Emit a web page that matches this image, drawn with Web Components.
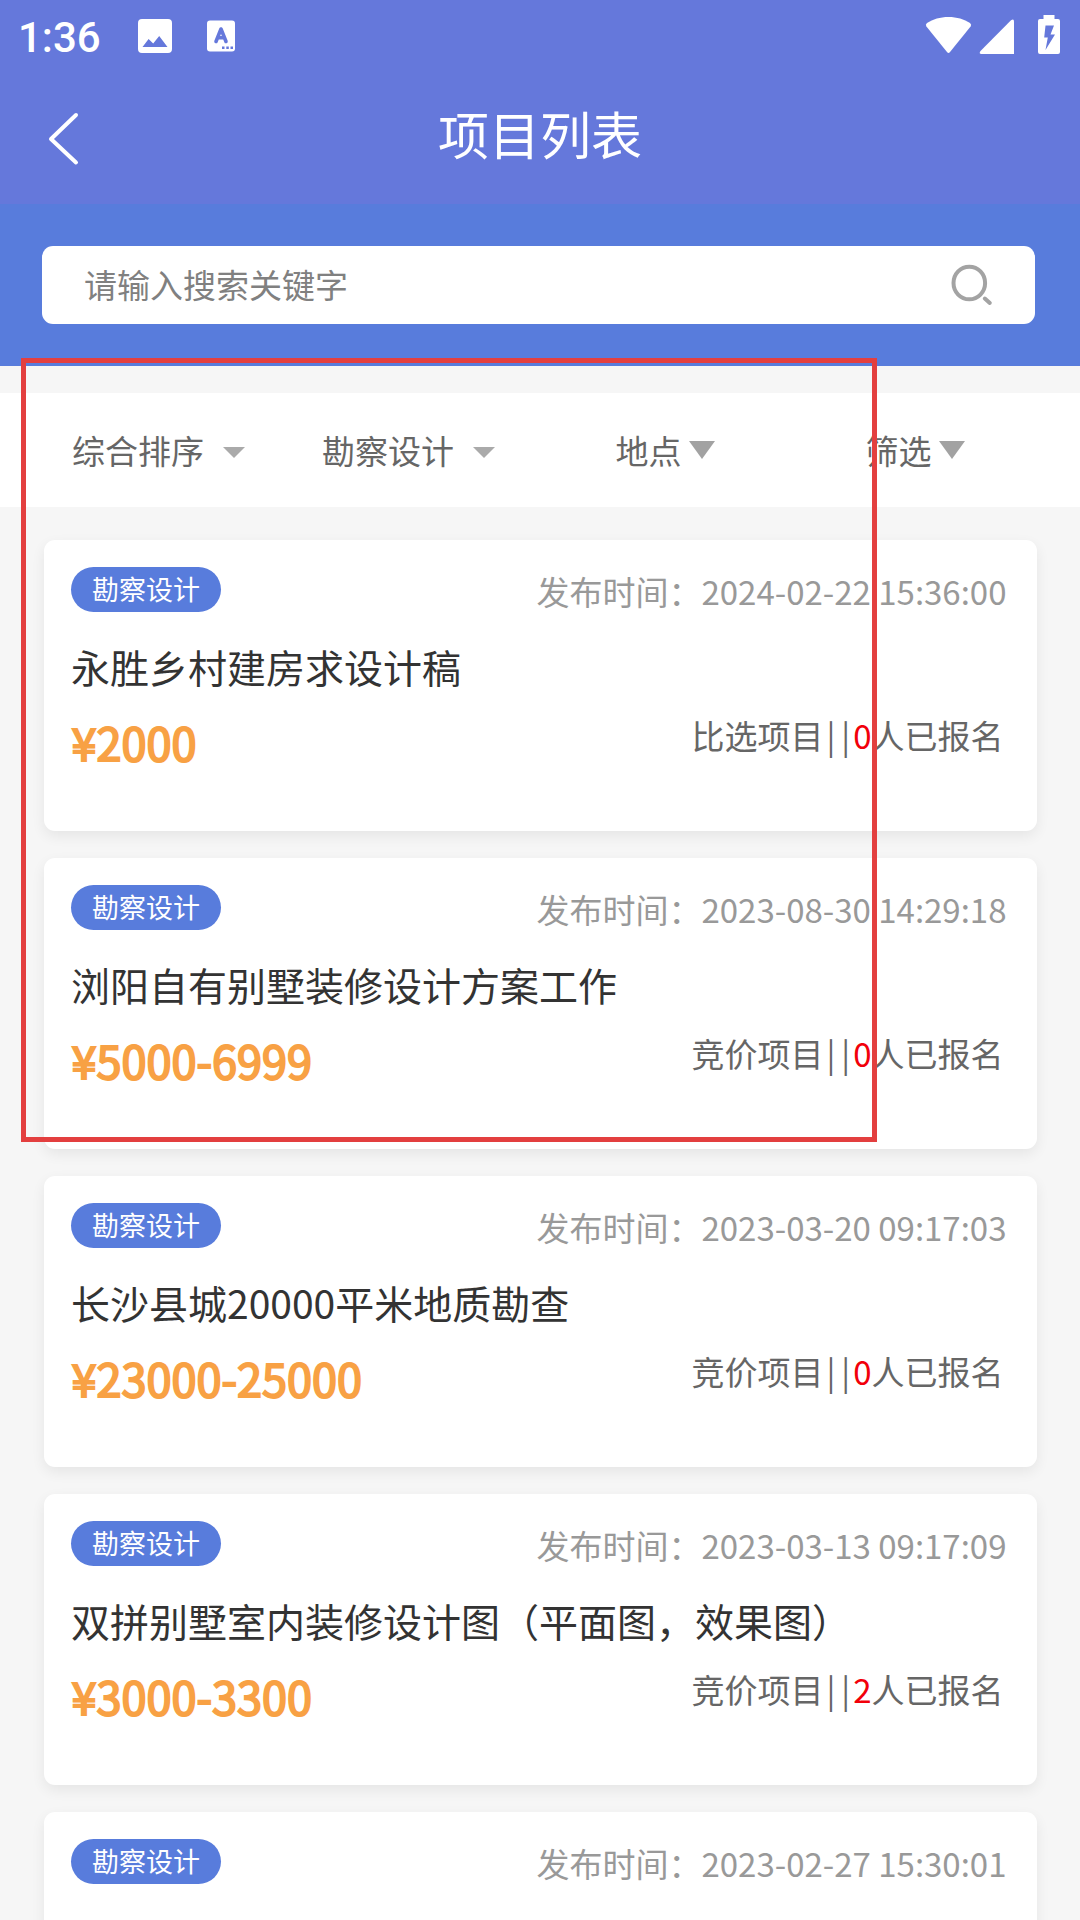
<!DOCTYPE html>
<html lang="zh-CN">
<head>
<meta charset="utf-8">
<title>项目列表</title>
<style>
  body {
    margin: 0;
    height: 1920px;
    overflow: hidden;
    background: #f6f6f6;
    font-family: "Noto Sans CJK SC", "Noto Sans", sans-serif;
  }
</style>
</head>
<body>
<project-page></project-page>

<script>
/*
 * StatusBar - системная строка: время, уведомления, связь и батарея
 */
class StatusBar extends HTMLElement {
  constructor() {
    super()
    this.attachShadow({ mode: 'open' })
  }
  connectedCallback() {
    this.shadowRoot.innerHTML = `
      <style>
        :host {
          display: flex;
          align-items: flex-start;
          height: 72px;
          color: #fff;
          fill: currentColor;
        }
        .time {
          width: 120px;
          padding-left: 18px;
          font: 500 42px/76px Roboto, sans-serif;
        }
        .right { margin-left: auto; }
        svg { display: block; }
      </style>
      <div class="time">1:36</div>
      <svg width="110" height="72" viewBox="138 0 110 72">
        <path fill-rule="evenodd" d="M142 19h26q4 0 4 4v26q0 4-4 4h-26q-4 0-4-4V23q0-4 4-4zM142.500 47h25l-8.300-11-6 7.600-4.600-4.600z"/>
        <rect x="207" y="20.500" width="28" height="31" rx="3"/>
        <path d="M216 41.500l5-12.500 5 12.500M218 37.800h6" fill="none" stroke="#6578db" stroke-width="3.600" stroke-linecap="round" stroke-linejoin="round"/>
        <path d="M222 46.500h2.500v2.500h-2.500zM226.300 46.500h2.500v2.500h-2.500zM230.500 46.500h2.500v2.500h-2.500z" fill="#6578db"/>
      </svg>
      <svg class="right" width="160" height="72" viewBox="920 0 160 72">
        <path d="M948.500 17c8.500 0 15.500 2.300 21.500 6q2 1.500.6 3.500L950 52q-1.500 1.800-3 0L926.400 26.500q-1.400-2 .6-3.500c6-3.700 13-6 21.500-6z"/>
        <path d="M1011 20.300q3-2 3 1.200V54h-32.500q-3 0-1-3z"/>
        <path fill-rule="evenodd" d="M1043.500 15h11v4h3.500q2 0 2 2v31q0 2-2 2h-18q-2 0-2-2V21q0-2 2-2h3.500zM1045.500 25.500l-1.300 12h3.600l-2.300 12.500 9.500-15.500h-4.500l3.500-9z"/>
      </svg>
    `
  }
}

/*
 * NavHeader - шапка со стрелкой "назад", заголовок передается через slot
 */
class NavHeader extends HTMLElement {
  constructor() {
    super()
    this.attachShadow({ mode: 'open' })
  }
  connectedCallback() {
    this.shadowRoot.innerHTML = `
      <style>
        :host {
          display: grid;
          grid-template-columns: 120px 1fr 120px;
          height: 132px;
          color: #fff;
        }
        h1 {
          margin: 0;
          font-size: 51px;
          font-weight: 400;
          line-height: 123px;
          text-align: center;
        }
      </style>
      <svg width="120" height="132" viewBox="0 72 120 132">
        <path d="M76 115L51 139 76 162.500" fill="none" stroke="#fff" stroke-width="4" stroke-linecap="round" stroke-linejoin="round"/>
      </svg>
      <h1><slot></slot></h1>
    `
  }
}

/*
 * SearchBox - строка поиска
 */
class SearchBox extends HTMLElement {
  constructor() {
    super()
    this.attachShadow({ mode: 'open' })
  }
  connectedCallback() {
    this.shadowRoot.innerHTML = `
      <style>
        :host {
          display: block;
          padding: 42px 45px 42px 42px;
          background: #587cdc;
        }
        .field {
          display: flex;
          justify-content: space-between;
          height: 78px;
          padding: 0 35px 0 42px;
          border-radius: 11px;
          background: #fff;
          color: #808080;
          font-size: 33px;
          line-height: 76px;
        }
      </style>
      <div class="field">
        <slot></slot>
        <svg width="60" height="78" viewBox="940 246 60 78" fill="none" stroke="#a3a3a3" stroke-linecap="round">
          <ellipse cx="969.300" cy="283" rx="15.800" ry="16.300" stroke-width="4"/>
          <path d="M984.800 298.500l5 4.500" stroke-width="4"/>
        </svg>
      </div>
    `
  }
}

/*
 * FilterItem - пункт фильтра с треугольником
 * Атрибут wide - вариант с маленьким треугольником и отступом
 */
class FilterItem extends HTMLElement {
  constructor() {
    super()
    this.attachShadow({ mode: 'open' })
  }
  connectedCallback() {
    this.shadowRoot.innerHTML = `
      <style>
        :host {
          display: flex;
          justify-content: center;
          align-items: center;
          gap: 7px;
          color: #666;
          font-size: 33px;
          line-height: 114px;
        }
        :host([wide]) {
          gap: 19px;
          padding-right: 13px;
        }
        i {
          border: 13.500px solid transparent;
          border-top: 18px solid #a2a2a2;
          border-bottom: 0;
        }
        :host([wide]) i {
          margin-top: 5px;
          border-width: 11px 11px 0;
          border-top-color: #aaa;
        }
      </style>
      <slot></slot><i></i>
    `
  }
}

/*
 * ProjectCard - карточка проекта
 * Получает данные через установку свойства project:
 * { time, title, price, kind, count }
 * Если title не задан, рисуется только верхняя строка
 */
class ProjectCard extends HTMLElement {
  constructor() {
    super()
    this.attachShadow({ mode: 'open' })
    this._project = {}
  }
  set project(value) {
    this._project = value
    this.render()
  }
  get project() {
    return this._project
  }
  render() {
    const { time, title, price, kind, count } = this.project
    const details = title ? `
      <div class="title">${title}</div>
      <div class="row">
        <span class="price">¥${price}</span>
        <span class="info">${kind}<span class="bar">|</span><span class="bar">|</span><b>${count}</b>人已报名</span>
      </div>
    ` : ''
    this.shadowRoot.innerHTML = `
      <style>
        :host {
          display: block;
          box-sizing: border-box;
          height: 291px;
          padding: 27px 30px 0 27px;
          border-radius: 11px;
          background: #fff;
          box-shadow: 0 5px 14px rgba(0, 0, 0, .07);
        }
        .row {
          display: flex;
          justify-content: space-between;
          align-items: flex-start;
          white-space: nowrap;
        }
        .tag {
          height: 45px;
          padding: 0 21px;
          border-radius: 23px;
          background: #587cdc;
          color: #fff;
          font-size: 27px;
          line-height: 43px;
        }
        .time {
          padding-right: .5px;
          color: #999;
          font-size: 33px;
          line-height: 48px;
        }
        .title {
          margin-top: 23px;
          color: #333;
          font-size: 39px;
          line-height: 56px;
        }
        .price {
          padding-left: .6px;
          color: #f8a144;
          font-size: 45px;
          line-height: 96px;
          -webkit-text-stroke: 2px #f8a144;
        }
        .info {
          padding-right: 3.500px;
          color: #666;
          font-size: 33px;
          line-height: 82px;
        }
        .bar {
          display: inline-block;
          width: 14.800px;
          text-align: center;
        }
        b {
          color: #f2000a;
          font-weight: 400;
        }
      </style>
      <div class="row">
        <span class="tag">勘察设计</span>
        <span class="time">发布时间：${time}</span>
      </div>
      ${details}
    `
  }
}

/*
 * ProjectPage - вся страница, карточки строятся по массиву projects
 */
const projects = [
  { time: '2024-02-22 15:36:00', title: '永胜乡村建房求设计稿', price: '2000', kind: '比选项目', count: 0 },
  { time: '2023-08-30 14:29:18', title: '浏阳自有别墅装修设计方案工作', price: '5000-6999', kind: '竞价项目', count: 0 },
  { time: '2023-03-20 09:17:03', title: '长沙县城20000平米地质勘查', price: '23000-25000', kind: '竞价项目', count: 0 },
  { time: '2023-03-13 09:17:09', title: '双拼别墅室内装修设计图（平面图，效果图）', price: '3000-3300', kind: '竞价项目', count: 2 },
  { time: '2023-02-27 15:30:01' }
]

class ProjectPage extends HTMLElement {
  constructor() {
    super()
    this.attachShadow({ mode: 'open' })
  }
  connectedCallback() {
    this.shadowRoot.innerHTML = `
      <style>
        :host {
          display: block;
          position: relative;
          height: 1920px;
          overflow: hidden;
        }
        header { background: #6578db; }
        nav {
          display: grid;
          grid-template-columns: repeat(4, 250px);
          margin-top: 27px;
          padding: 0 40px;
          background: #fff;
        }
        main {
          display: grid;
          gap: 27px;
          padding: 33px 43px 0 44px;
        }
        /* рамка выделения поверх страницы */
        .mark {
          position: absolute;
          left: 21px;
          top: 358px;
          width: 846px;
          height: 774px;
          border: 5px solid #e33f3f;
        }
      </style>
      <header>
        <status-bar></status-bar>
        <nav-header>项目列表</nav-header>
      </header>
      <search-box>请输入搜索关键字</search-box>
      <nav>
        <filter-item wide>综合排序</filter-item>
        <filter-item wide>勘察设计</filter-item>
        <filter-item>地点</filter-item>
        <filter-item>筛选</filter-item>
      </nav>
      <main></main>
      <div class="mark"></div>
    `
    const main = this.shadowRoot.querySelector('main')
    projects.forEach(item => {
      const card = document.createElement('project-card')
      card.project = item
      main.appendChild(card)
    })
  }
}

window.customElements.define('status-bar', StatusBar)
window.customElements.define('nav-header', NavHeader)
window.customElements.define('search-box', SearchBox)
window.customElements.define('filter-item', FilterItem)
window.customElements.define('project-card', ProjectCard)
window.customElements.define('project-page', ProjectPage)
</script>
</body>
</html>
